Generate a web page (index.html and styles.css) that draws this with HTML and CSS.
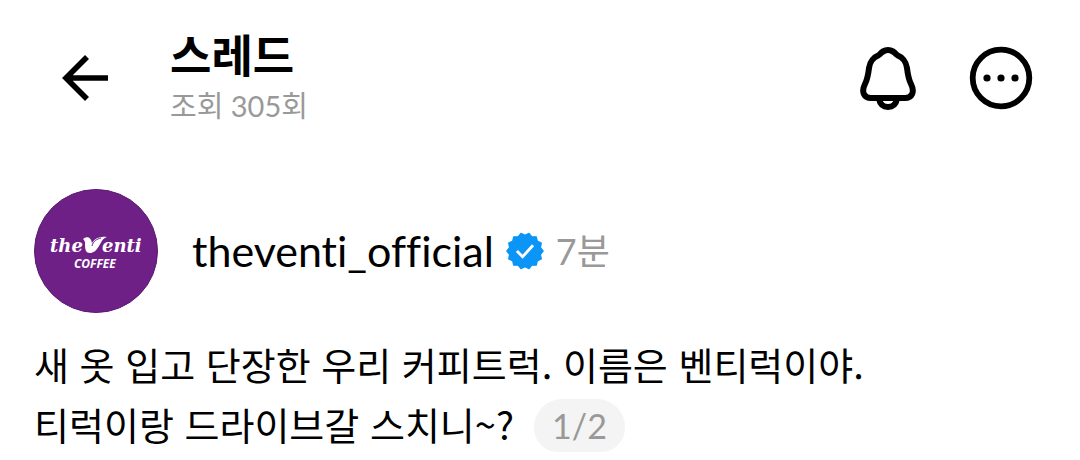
FILE: index.html
```html
<!DOCTYPE html>
<html lang="ko">
<head>
<meta charset="utf-8">
<meta name="viewport" content="width=device-width, initial-scale=1">
<title>스레드</title>
<link rel="stylesheet" href="styles.css">
</head>
<body>
<header class="topbar">
  <button class="icon-button back" type="button" aria-label="뒤로">
    <svg width="48" height="48" viewBox="0 0 48 48" fill="none" stroke="currentColor" stroke-width="5.6"><path d="M47 24H5M26 3 5 24l21 21"/></svg>
  </button>
  <div class="heading">
    <h1 class="title">스레드</h1>
    <p class="views">조회 305회</p>
  </div>
  <button class="icon-button" type="button" aria-label="알림">
    <svg width="56" height="64" viewBox="0 0 56 64" fill="none" stroke="currentColor" stroke-width="6" stroke-linejoin="round"><path d="M28 4c-4 0-6 2-9 5-7 3-9 7-10 13-1 9-2 12-4 16-4 8-1 14 6 14h34c7 0 10-6 6-14-2-4-3-7-4-16-1-6-3-10-10-13-3-3-5-5-9-5Z"/><path d="M19 53c1 5 4 8 9 8s8-3 9-8"/></svg>
  </button>
  <button class="icon-button" type="button" aria-label="더 보기">
    <svg width="64" height="64" viewBox="0 0 64 64"><circle cx="32" cy="32" r="28.3" fill="none" stroke="currentColor" stroke-width="5.8"/><circle cx="18" cy="32" r="3.6"/><circle cx="32" cy="32" r="3.6"/><circle cx="46" cy="32" r="3.6"/></svg>
  </button>
</header>
<main class="post">
  <div class="author">
    <svg class="avatar" width="124" height="124" viewBox="0 0 124 124" role="img" aria-label="theventi coffee">
      <circle cx="62" cy="62" r="61.5" fill="#6e2087" stroke="#5c1972"/>
      <g fill="#fff">
        <text class="logo-name" x="16" y="63">the</text>
        <path d="M49 50c4-3 8-2 9 4 3-5 8-7 15-6-4 1-5 4-8 9s-6 7-9 7c-5 0-5-5-5-10 0-2-1-3-2-4Z"/>
        <text class="logo-name" x="68" y="63">enti</text>
        <text class="logo-sub" x="40" y="79">COFFEE</text>
      </g>
      <path d="M58 57c1-5 5-7 9-8" fill="none" stroke="#6e2087"/>
    </svg>
    <a class="username" href="#">theventi_official</a>
    <svg class="verified" width="38" height="38" viewBox="-20 -20 40 40" role="img" aria-label="인증됨"><path fill="#0b95f6" stroke="#0b95f6" stroke-width="1.5" stroke-linejoin="round" d="M19 0 16.1 3.7 17.1 8.2 12.9 10.3 11.8 14.9 7.2 14.9 4.2 18.5 0 16.5-4.2 18.5-7.2 14.9-11.8 14.9-12.9 10.3-17.1 8.2-16.1 3.7-19 0-16.1-3.7-17.1-8.2-12.9-10.3-11.8-14.9-7.2-14.9-4.2-18.5 0-16.5 4.2-18.5 7.2-14.9 11.8-14.9 12.9-10.3 17.1-8.2 16.1-3.7Z"/><path d="M-8.5 0l6 6L8.500-6" fill="none" stroke="#fff" stroke-width="3"/></svg>
    <time class="age">7분</time>
  </div>
  <p class="content">새 옷 입고 단장한 우리 커피트럭. 이름은 벤티럭이야.<br>티럭이랑 드라이브갈 스치니~?<span class="counter">1/2</span></p>
</main>
</body>
</html>
```

FILE: styles.css
```css
* { box-sizing: border-box; }
body { margin: 0; background: #fff; color: #000; font-family: Lato, "Noto Sans CJK KR", sans-serif; font-variant-ligatures: none; }
h1, p { margin: 0; }
.topbar { display: flex; align-items: center; padding: 28px 47px 0 61px; gap: 53px; }
.icon-button { display: flex; padding: 0; border: 0; background: none; color: inherit; }
.heading { flex: 1; margin-left: 8px; }
.title { font-size: 45px; line-height: 56px; font-weight: 700; }
.views { font-size: 29px; line-height: 44px; color: #999; }
.post { padding: 61px 34px 0; }
.author { display: flex; align-items: center; }
.avatar { flex: none; }
.logo-name { font: italic 700 18px "DejaVu Serif", serif; }
.logo-sub { font: italic 700 12px "Open Sans", sans-serif; }
.username { margin-left: 34px; color: inherit; text-decoration: none; font-size: 43px; line-height: 56px; }
.verified { margin-left: 12px; flex: none; }
.age { margin-left: 12px; font-size: 36px; line-height: 56px; color: #999; }
.content { padding-top: 21px; font-family: "Noto Sans CJK KR", sans-serif; font-size: 38px; line-height: 60px; }
.counter { display: inline-flex; align-items: center; justify-content: center; vertical-align: top; width: 91px; height: 53px; margin: 5px 0 0 20px; border-radius: 28px 28px 24px 24px; background: #f4f4f4; color: #999; font-family: Lato, sans-serif; font-size: 34px; line-height: 52px; }
```
